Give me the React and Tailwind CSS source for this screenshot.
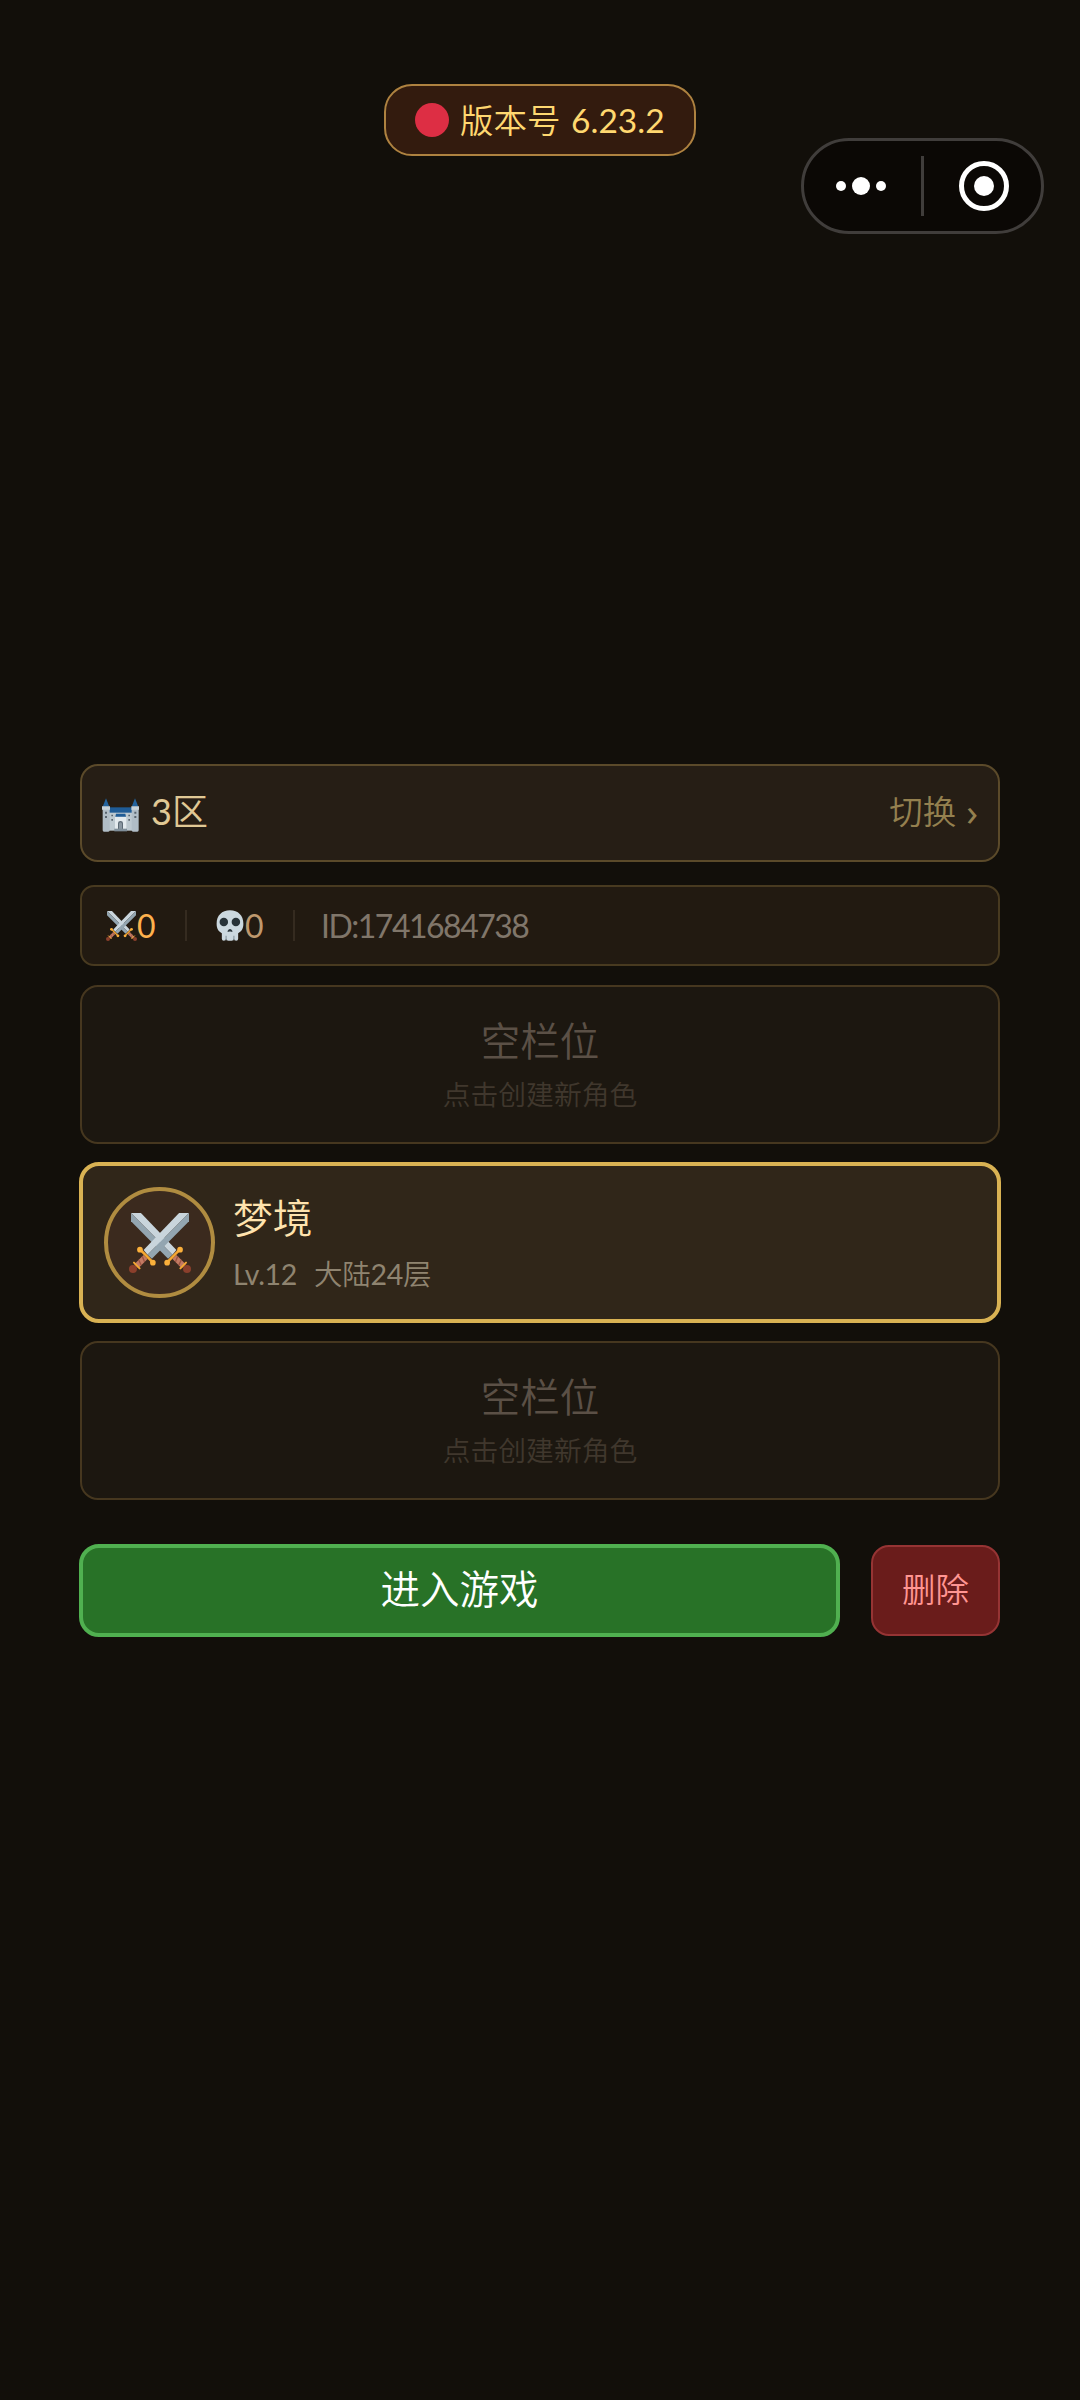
function Sword() {
  return (
    <g>
      <path d="M280 97H250L143 208L155 222Z" fill="#c9d5dc" />
      <path d="M280 97V122L168 234L155 222Z" fill="#93a5b0" />
      <path d="M149 229L121 257" stroke="#c47a63" strokeWidth="17" />
      <path d="M139 227L146 244M128 237L136 254" stroke="#9c5442" strokeWidth="4" />
      <path d="M133 207L171 245" stroke="#f5a733" strokeWidth="8" strokeLinecap="round" />
      <circle cx="132" cy="207" r="8.5" fill="#fbb03b" />
      <circle cx="171" cy="246" r="8.5" fill="#fbb03b" />
      <circle cx="111" cy="265" r="12" fill="#8b3f2c" />
      <path d="M114 246L131 263" stroke="#f5a733" strokeWidth="6" strokeLinecap="round" />
    </g>
  );
}

function Swords({ className }) {
  return (
    <svg viewBox="99 97 187 180" className={className} preserveAspectRatio="none">
      <g>
        <path d="M105 97H135L242 208L230 222Z" fill="#c9d5dc" />
        <path d="M105 97V122L217 234L230 222Z" fill="#93a5b0" />
        <path d="M236 229L264 257" stroke="#c47a63" strokeWidth="17" />
        <path d="M246 227L239 244M257 237L249 254" stroke="#9c5442" strokeWidth="4" />
        <path d="M252 207L214 245" stroke="#f5a733" strokeWidth="8" />
        <circle cx="253" cy="207" r="8.5" fill="#fbb03b" />
        <circle cx="214" cy="246" r="8.5" fill="#fbb03b" />
        <circle cx="274" cy="265" r="12" fill="#8b3f2c" />
        <path d="M271 246L254 263" stroke="#f5a733" strokeWidth="6" strokeLinecap="round" />
      </g>
      <Sword />
    </svg>
  );
}

function Castle({ className }) {
  return (
    <svg viewBox="96 143 111 100" className={className}>
      <path d="M116 170H188V188H116Z" fill="#1f5c96" />
      <path d="M116 186H188V240H116Z" fill="#bdc9d0" />
      <path d="M108 143L118 168H98ZM195 143L205 168H185Z" fill="#23639d" />
      <path d="M98 175H119V239Q119 243 115 243H102Q98 243 98 239ZM185 175H206V239Q206 243 202 243H189Q185 243 185 239Z" fill="#b0bdc6" />
      <path d="M96 167H120V177H96ZM184 167H208V177H184Z" fill="#c7d2d9" />
      <path d="M105 183h6v6h-6zM105 196h6v6h-6zM193 183h6v6h-6zM193 196h6v6h-6zM124 192h5v5h-5zM124 205h5v5h-5zM175 192h5v5h-5zM175 205h5v5h-5z" fill="#59656f" />
      <path d="M135 198H169V236H135Z" fill="#e3eaee" />
      <path d="M138 189H166L168 198H136Z" fill="#1f5c96" />
      <path d="M144 236V218Q144 211 151.500 211Q159 211 159 218V236Z" fill="#5b6974" />
      <path d="M147 236V218Q151.500 212 156 218V236Z" fill="#8a97a1" />
      <path d="M133 234H171V242H133Z" fill="#7f8e99" />
    </svg>
  );
}

function Skull({ className }) {
  return (
    <svg viewBox="437 119 84 95" className={className}>
      <path d="M479 120C504 120 520 136 520 161C520 178 513 185 504 190V207Q504 213 498 213Q492 213 491 207Q490 213 484 213H474Q468 213 467 207Q466 213 460 213Q454 213 454 207V190C445 185 438 178 438 161C438 136 454 120 479 120Z" fill="#cbd8df" />
      <circle cx="460" cy="156" r="13" fill="#273238" />
      <circle cx="497" cy="156" r="13" fill="#273238" />
      <path d="M471 184Q479 171 487 184Q485 188 479 184Q473 188 471 184Z" fill="#273238" />
      <path d="M467 198V212M491 198V212" stroke="#7d8e98" strokeWidth="3" />
    </svg>
  );
}

function EmptySlot({ className }) {
  return (
    <section className={`mx-[1px] flex h-[159px] flex-col items-center rounded-[18px] border-2 border-[#46371f] bg-[#1c1710] pt-[32px] ${className}`}>
      <div className="h-[44px] text-[39.500px] leading-[44px] text-[#5b5046]">空栏位</div>
      <div className="mt-[16px] h-[32px] text-[27.800px] leading-[32px] text-[#40372d]">点击创建新角色</div>
    </section>
  );
}

export default function App() {
  return (
    <main className="h-[2400px] w-[1080px] overflow-hidden whitespace-nowrap bg-[#120f0a] pt-[84px] font-['Lato','Noto_Sans_CJK_SC_DemiLight','Noto_Sans_CJK_SC',sans-serif] font-normal">
      <header className="relative h-[150px]">
        <div className="mx-auto flex h-[72px] w-[312px] items-center rounded-[28px] border-2 border-[#ae8240] bg-[#331b0e] pl-[29px]">
          <span className="size-[34px] rounded-full bg-[#dd2e44]" />
          <span className="ml-[11px] mt-[-1px] text-[33.500px] leading-[40px] text-[#ffd870] [word-spacing:2px]">版本号 6.23.2</span>
        </div>
        <div className="absolute left-[801px] top-[54px] flex h-[96px] w-[243px] items-center rounded-full border-[3px] border-[#403d3b] bg-[#0b0805]">
          <div className="flex w-[117px] items-center justify-center gap-[6px] pr-[3px]">
            <span className="size-[10px] rounded-full bg-white" />
            <span className="size-[18px] rounded-full bg-white" />
            <span className="size-[10px] rounded-full bg-white" />
          </div>
          <span className="h-[60px] w-[3px] bg-[#403d3b]" />
          <div className="ml-[35px] flex size-[50px] items-center justify-center rounded-full border-[5px] border-white">
            <span className="size-[20px] rounded-full bg-white" />
          </div>
        </div>
      </header>

      <div className="mx-[79px] mt-[530px]">
        <section className="mx-[1px] flex h-[98px] items-center rounded-[18px] border-2 border-[#5b4a2a] bg-[#261e15] px-[20px]">
          <Castle className="mt-[3px] h-[34px] w-[37px]" />
          <span className="ml-[12px] mt-[-4px] text-[36px] leading-[44px] text-[#e0c995]">3区</span>
          <span className="ml-auto mt-[-5px] text-[33.500px] leading-[40px] text-[#94804f]">切换</span>
          <span className="ml-[10px] mt-[-4px] font-['Noto_Sans'] text-[38px] leading-[40px] text-[#94804f]">›</span>
        </section>

        <section className="mx-[1px] mt-[23px] flex h-[81px] items-center rounded-[14px] border-2 border-[#483a20] bg-[#221a11] pl-[24px]">
          <Swords className="h-[30px] w-[31px]" />
          <span className="w-[18px] text-[32px] leading-[40px] text-[#ffb14d]">0</span>
          <span className="ml-[30px] h-[31px] w-[2px] bg-[#352b20]" />
          <Skull className="ml-[29px] h-[31px] w-[28px]" />
          <span className="ml-[1px] w-[18px] text-[32px] leading-[40px] text-[#bf986d]">0</span>
          <span className="ml-[30px] h-[31px] w-[2px] bg-[#352b20]" />
          <span className="ml-[26px] text-[32px] leading-[40px] tracking-[-1.500px] text-[#80766a]">ID:1741684738</span>
        </section>

        <EmptySlot className="mt-[19px]" />

        <section className="mt-[18px] flex h-[161px] items-start rounded-[20px] border-4 border-[#d9b253] bg-[#302619] pl-[21px] pt-[21px]">
          <div className="flex size-[111px] items-center justify-center rounded-full border-4 border-[#b08c40] bg-[#3b2a1e]">
            <Swords className="h-[60px] w-[62px]" />
          </div>
          <div className="ml-[18px] mt-[9px]">
            <div className="text-[39.800px] leading-[44px] text-[#ffe3ae]">梦境</div>
            <div className="mt-[18px] flex gap-[17px] text-[28.500px] leading-[32px] tracking-[-0.300px] text-[#8f8470]">
              <span>Lv.12</span>
              <span>大陆24层</span>
            </div>
          </div>
        </section>

        <EmptySlot className="mt-[18px]" />

        <div className="mt-[44px] flex items-center">
          <button className="flex h-[93px] w-[761px] items-center justify-center rounded-[20px] border-4 border-[#50b050] bg-[#287227] pb-[4px] text-[39.500px] leading-[48px] text-white">进入游戏</button>
          <button className="ml-[31px] flex h-[91px] w-[129px] items-center justify-center rounded-[18px] border-2 border-[#963434] bg-[#6a1c1b] pb-[3px] text-[33.500px] leading-[40px] text-[#ff9592]">删除</button>
        </div>
      </div>
    </main>
  );
}
